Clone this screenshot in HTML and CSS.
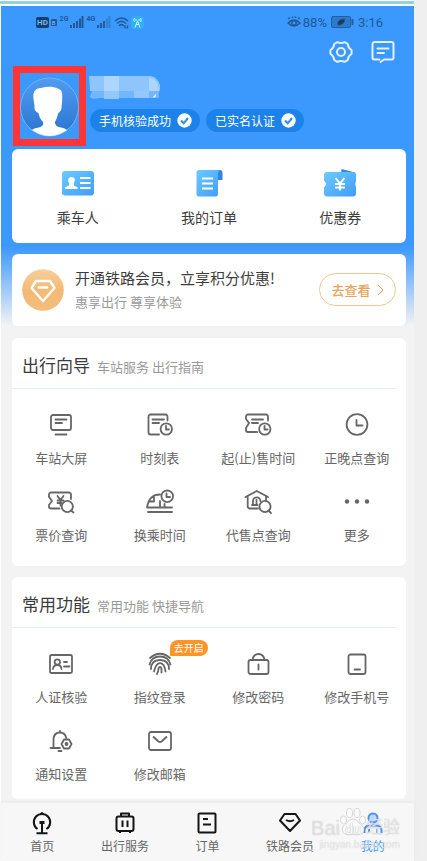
FILE: index.html
```html
<!DOCTYPE html>
<html lang="zh-CN">
<head>
<meta charset="utf-8">
<meta name="viewport" content="width=device-width, initial-scale=1">
<title>我的</title>
<link rel="stylesheet" href="styles.css">
</head>
<body>
<div class="frame">
  <div class="strip"></div>
  <div class="phone">
    <header class="hero">
      <div class="status">
        <div class="status-side">
          <span class="hd">HD</span><span class="sim">B</span>
          <span class="net">2G</span>
          <svg class="bars" width="13" height="12" viewBox="0 0 13 12"><path d="M1 12V9M4 12V7M7 12V5M10 12V2.500M12.500 12V0"/></svg>
          <span class="net">4G</span>
          <svg class="bars" width="13" height="12" viewBox="0 0 13 12"><path d="M1 12V9M4 12V7M7 12V5"/><path class="dim" d="M10 12V2.500M12.500 12V0"/></svg>
          <svg class="wifi" width="15" height="13" viewBox="0 0 15 13"><path d="M1 5Q7.500-1 14 5M3 7.500Q7.500 3 12 7.500M5 9.800Q7.500 7.500 10 9.800"/><path d="M7.500 11.500h.5M11 9.500v3M13.500 9.500v3"/></svg>
          <svg class="hotspot" width="13" height="13" viewBox="0 0 13 13"><rect width="13" height="13" rx="3" fill="#2cb0fa"/><path d="M6.500 5L4 11.500M6.500 5L9 11.500M5 8.500h3M3.500 2Q2 4 3.500 6M9.500 2Q11 4 9.500 6M5 3v2M8 3v2" fill="none" stroke="#dff4ff" stroke-width="1"/></svg>
        </div>
        <div class="status-side">
          <svg class="eye" width="14" height="12" viewBox="0 0 14 12"><path d="M1 7Q7 1 13 7Q7 13 1 7ZM2.500 3L1.500 1.500M5.500 2V.5M8.500 2V.5M11.500 3l1-1.500"/><circle cx="7" cy="7" r="2.200"/></svg>
          <span>88%</span>
          <svg class="battery" width="23" height="12" viewBox="0 0 23 12"><rect x=".5" y=".5" width="19" height="11" rx="1.500" fill="#2f7acb" stroke="#235e9f"/><path d="M7 9C6 5 9 3 14 3C13.500 7 11 9.500 7 9Z" fill="#173a64"/><path d="M21.500 3v6" stroke="#235e9f" stroke-width="2"/></svg>
          <span>3:16</span>
        </div>
      </div>
      <div class="toolbar">
        <button class="icon-button" aria-label="设置"><svg width="24" height="24" viewBox="0 0 24 24"><path d="M8.300 2.200Q12 4 15.700 2.200L18.800 4Q19 7.800 22.600 10.300V13.700Q19 16.200 18.800 20L15.700 21.800Q12 20 8.300 21.800L5.200 20Q5 16.200 1.400 13.700V10.300Q5 7.800 5.200 4Z"/><circle cx="12" cy="12" r="4"/></svg></button>
        <button class="icon-button" aria-label="消息"><svg width="24" height="24" viewBox="0 0 24 24"><path d="M8.500 19.500H3.500a2 2 0 0 1-2-2V4a2 2 0 0 1 2-2h17a2 2 0 0 1 2 2v13.500a2 2 0 0 1-2 2H13L9.500 22M6.500 8.500h11M6.500 13h6.500"/></svg></button>
      </div>
      <section class="profile">
        <div class="avatar">
          <svg width="59" height="66" viewBox="0 0 59 66">
            <defs>
              <linearGradient id="avatarFill" x1="0" y1="0" x2="0" y2="1"><stop offset="0" stop-color="#519cf2"/><stop offset="1" stop-color="#2a73cf"/></linearGradient>
              <clipPath id="avatarClip"><circle cx="29.500" cy="34" r="29"/></clipPath>
            </defs>
            <circle cx="29.500" cy="34" r="29" fill="url(#avatarFill)" stroke="#73b2f8"/>
            <path clip-path="url(#avatarClip)" fill="#fff" d="M14.500 33L13.500 26C12.500 18 16 15 21 15C29 12.500 38 14 41.500 18Q43 22 41.500 34C42 38 39 39 38 41C37 45 36 47 35 49C35 53 38 54 43 55C48 57 50 58 51 66H8C8 58 11 57 16 55C21 54 24 53 23 49C20 46 19 43 18.500 40C16 39 14 37 14.500 33Z"/>
          </svg>
        </div>
        <div class="identity">
          <svg width="72" height="25" viewBox="0 0 72 25" aria-label="姓名已隐藏">
            <path fill="#8fc5fd" d="M0 0H62Q69 2 71 9V15H1Z"/>
            <path fill="#add5fe" d="M15 0H30V15H15ZM60 2Q69 2 70 15H60Z"/>
            <path fill="#72b6fc" d="M3 15H70V22H10Q1 24 1 20Z"/>
            <path fill="#93c7fd" d="M15 15H30V23H15ZM45 15H60V22H45Z"/>
            <path fill="#fff" d="M64 21L67 18V20L65 22Z"/>
          </svg>
          <div class="chips">
            <span class="chip">手机核验成功<svg width="15" height="15" viewBox="0 0 15 15"><circle cx="7.500" cy="7.500" r="7.200" fill="#fff"/><path d="M4 7.500l2.700 2.800L11 5"/></svg></span>
            <span class="chip">已实名认证<svg width="15" height="15" viewBox="0 0 15 15"><circle cx="7.500" cy="7.500" r="7.200" fill="#fff"/><path d="M4 7.500l2.700 2.800L11 5"/></svg></span>
          </div>
        </div>
      </section>

      <nav class="card shortcuts" aria-label="快捷入口">
        <a class="tile shortcut" href="#passengers">
          <svg width="34" height="28" viewBox="0 0 34 28">
            <defs><linearGradient id="blue" x1="0" y1="0" x2="1" y2="1"><stop offset="0" stop-color="#6ccbff"/><stop offset="1" stop-color="#409cfa"/></linearGradient></defs>
            <rect x="1" y="2" width="32" height="24.500" rx="3" fill="url(#blue)"/>
            <path fill="#fff" d="M10.500 8C14 8 14.500 11 13 14C12.500 16.500 13 17 16.500 18V20H4V18C8 17 8.500 16.500 8 14C6.500 11 7 8 10.500 8Z"/>
            <path d="M19 9h10.500M19 14h10.500M19 19h10.500" stroke="#fff" stroke-width="2"/>
          </svg>
          <span>乘车人</span>
        </a>
        <a class="tile shortcut" href="#orders">
          <svg width="34" height="28" viewBox="0 0 34 28">
            <path d="M24 1h4q2.500 0 2.500 3v7H26V4Z" fill="#2d86e4"/>
            <path d="M7 1H28Q26 2 26 5V25q0 2.500-2.500 2.500H7Q4.500 27.500 4.500 25V3.500Q4.500 1 7 1Z" fill="url(#blue)"/>
            <path d="M10 9.500h11M10 14.500h11M10 19.500h11" stroke="#fff" stroke-width="2"/>
          </svg>
          <span>我的订单</span>
        </a>
        <a class="tile shortcut" href="#coupons">
          <svg width="34" height="28" viewBox="0 0 34 28">
            <path d="M18.500 0L32 3.500V6H18Z" fill="#2d86e4"/>
            <path d="M4 3H30Q33 3 33 6V12Q31.500 15 33 18V24.500Q33 27.500 30 27.500H4Q1 27.500 1 24.500V18Q5.500 15 1 12V6Q1 3 4 3Z" fill="url(#blue)"/>
            <path d="M12.500 9l4.500 5.500 4.500-5.500M12 15h10M12 18.500h10M17 14.500v7" stroke="#fff" stroke-width="1.800" fill="none"/>
          </svg>
          <span>优惠券</span>
        </a>
      </nav>

      <section class="card member">
        <svg class="medal" width="42" height="42" viewBox="0 0 42 42">
          <defs><linearGradient id="gold" x1="0" y1="0" x2="0" y2="1"><stop offset="0" stop-color="#f7cf9b"/><stop offset=".5" stop-color="#f3ba75"/><stop offset="1" stop-color="#f3bd7c"/></linearGradient></defs>
          <circle cx="21" cy="21" r="20.800" fill="url(#gold)"/>
          <path d="M14 12H28L32.500 19L21 32L9.500 19Z" fill="none" stroke="#fff" stroke-width="2.400"/>
          <path d="M17 18.500h8" stroke="#fff" stroke-width="2.600" stroke-linecap="round"/>
        </svg>
        <div class="member-text">
          <h2>开通铁路会员，立享积分优惠!</h2>
          <p>惠享出行 尊享体验</p>
        </div>
        <button class="join">去查看<svg width="7" height="12" viewBox="0 0 7 12"><path d="M1 1l5 5-5 5"/></svg></button>
      </section>
    </header>

    <main class="content">
      <section class="card">
        <div class="card-head"><h2>出行向导</h2><p>车站服务 出行指南</p></div>
        <div class="grid">
          <a class="tile" href="#screen"><svg class="line" width="28" height="28" viewBox="0 0 28 28"><rect x="4" y="4" width="20" height="15" rx="2"/><path d="M8.500 8.500h11M8.500 12h6.500M8.500 23.500h11"/></svg><span>车站大屏</span></a>
          <a class="tile" href="#timetable"><svg class="line" width="28" height="28" viewBox="0 0 28 28"><path d="M21.500 9.500v-4a2 2 0 0 0-2-2h-15a2 2 0 0 0-2 2v16a2 2 0 0 0 2 2H13M6.500 8.500H18M6.500 12H13"/><circle cx="20.300" cy="18" r="5.700"/><path d="M20 15v3.500h3"/></svg><span>时刻表</span></a>
          <a class="tile" href="#sale"><svg class="line" width="28" height="28" viewBox="0 0 28 28"><path d="M24 9.500v-4a2 2 0 0 0-2-2H4a2 2 0 0 0-2 2V8l3 4-3 5v2a2 2 0 0 0 2 2h9M8 8.500h11M8 12h6"/><circle cx="20.800" cy="18" r="5.700"/><path d="M20.500 15v3.500h3"/></svg><span>起(止)售时间</span></a>
          <a class="tile" href="#ontime"><svg class="line" width="28" height="28" viewBox="0 0 28 28"><circle cx="14" cy="13.500" r="10.400"/><path d="M13.500 9v5.500h6"/></svg><span>正晚点查询</span></a>
          <a class="tile" href="#price"><svg class="line" width="28" height="28" viewBox="0 0 28 28"><path d="M24 11V6.500a2 2 0 0 0-2-2H4a2 2 0 0 0-2 2V9l3 4-3 4v1.500a2 2 0 0 0 2 2h8.500M10.500 8l3 4 3-4M10.500 12.500h6M10.500 15h4M13.500 12v5.500"/><circle cx="20.300" cy="18.500" r="5.600"/><path d="M24 22.500l2.500 2"/></svg><span>票价查询</span></a>
          <a class="tile" href="#transfer"><svg class="line" width="28" height="28" viewBox="0 0 28 28"><path d="M14 6.500C7 6.500 2.500 10 1 19.500H26M3.500 13.500H8V8M14 13v6.500M18.500 16v3.500M2 24H26"/><circle cx="21.200" cy="8.300" r="5.800"/><path d="M20.500 5.500V9h3.500"/></svg><span>换乘时间</span></a>
          <a class="tile" href="#agency"><svg class="line" width="28" height="28" viewBox="0 0 28 28"><path d="M1.500 9L12.800 3 24 9M3.700 8v10.500a2 2 0 0 0 2 2H14M22 8.500v4M9 17v-4a3.700 3.700 0 0 1 7.400 0M8 17h5.500M12.500 12v5"/><circle cx="21" cy="18.500" r="5.600"/><path d="M24.500 22.500l2.500 2.500"/></svg><span>代售点查询</span></a>
          <a class="tile" href="#more"><svg width="28" height="28" viewBox="0 0 28 28" fill="#666"><circle cx="4" cy="13.500" r="2.200"/><circle cx="14" cy="13.500" r="2.200"/><circle cx="24" cy="13.500" r="2.200"/></svg><span>更多</span></a>
        </div>
      </section>

      <section class="card card-last">
        <div class="card-head"><h2>常用功能</h2><p>常用功能 快捷导航</p></div>
        <div class="grid">
          <a class="tile" href="#verify"><svg class="line" width="28" height="28" viewBox="0 0 28 28"><rect x="3" y="5" width="22" height="18" rx="1.500"/><circle cx="10.300" cy="12" r="2.700"/><path d="M6 19Q6.500 15 10.300 15T14.500 19M17 12h3M17 16.500h5.500"/></svg><span>人证核验</span></a>
          <a class="tile" href="#fingerprint"><svg class="line" width="28" height="28" viewBox="0 0 28 28"><path d="M4 8Q14-.5 24 8M3.500 14.500Q5.500 6.500 14 6.500Q22.500 6.500 24.500 14.500M5 19Q5 10 14 10Q23 10 23 19M8 21.500Q10 13.200 14 13.200Q18.500 13.200 19.500 21.500M11 24Q12.500 21 12.500 18.500Q14 15.500 15.500 18.500V22.500"/></svg><span>指纹登录</span><b class="badge">去开启</b></a>
          <a class="tile" href="#password"><svg class="line" width="28" height="28" viewBox="0 0 28 28"><rect x="4.500" y="10" width="20" height="14" rx="2"/><path d="M8.500 10a6 6 0 0 1 12 0M14.500 14.500v5"/></svg><span>修改密码</span></a>
          <a class="tile" href="#mobile"><svg class="line" width="28" height="28" viewBox="0 0 28 28"><rect x="5.500" y="4.500" width="17" height="19.500" rx="2"/><path d="M11.500 19.500h5.500"/></svg><span>修改手机号</span></a>
          <a class="tile" href="#notice"><svg class="line" width="28" height="28" viewBox="0 0 28 28"><path d="M13 4V5M3.500 21H13M6.500 20.500V12Q7 5.500 13 5.500Q18 5.500 19.300 11M11.500 24h3"/><path d="M17 12.500h5l2.500 4.500-2.500 4.500h-5L14.500 17Z"/><circle cx="19.500" cy="17" r="1"/></svg><span>通知设置</span></a>
          <a class="tile" href="#email"><svg class="line" width="28" height="28" viewBox="0 0 28 28"><rect x="3" y="5" width="22" height="18" rx="2"/><path d="M7.500 10l5 4.500q1.500 1 3 0l5-4.500"/></svg><span>修改邮箱</span></a>
        </div>
      </section>
    </main>

    <nav class="tabs" aria-label="主导航">
      <a class="tab" href="#home"><svg width="24" height="24" viewBox="0 0 24 24"><path d="M7.500 18A8.200 8.200 0 1 1 16.500 18M12 12v9.500M6.500 22.300h11M10.500 3l1.500-1 1.500 1"/><path d="M9.500 11.500h5" stroke-width="3"/></svg><span>首页</span></a>
      <a class="tab" href="#travel"><svg width="24" height="24" viewBox="0 0 24 24"><rect x="3.500" y="5.500" width="17" height="14.500" rx="2"/><path d="M8 5V2.500h8V5M9.500 9.500v6.500M14.500 9.500v6.500M7 20v2M17 20v2"/></svg><span>出行服务</span></a>
      <a class="tab" href="#order"><svg width="24" height="24" viewBox="0 0 24 24"><rect x="3.500" y="2.500" width="17" height="19" rx="1"/><path d="M8 8h5M8 13.500h8"/></svg><span>订单</span></a>
      <a class="tab" href="#member"><svg width="24" height="24" viewBox="0 0 24 24"><path d="M6.500 3H17.500L22 9.500 12 20 2 9.500ZM8 9q4 2.500 8 0"/></svg><span>铁路会员</span></a>
      <a class="tab tab-active" href="#me" aria-current="page"><svg width="24" height="24" viewBox="0 0 24 24"><circle cx="12" cy="7" r="4.500" fill="#bfd8fc"/><path d="M3.500 22V19Q4 14.500 9 14.500H15Q20 14.500 20.500 19V22M8 18v4M16 18v4"/></svg><span>我的</span></a>
    </nav>

    <div class="watermark">
      <div class="wm-brand">
        <span>Bai</span>
        <span class="wm-paw"><svg width="26" height="28" viewBox="0 0 26 28"><ellipse cx="3.500" cy="12" rx="3" ry="4"/><ellipse cx="9.500" cy="5" rx="3" ry="4.500"/><ellipse cx="17" cy="5" rx="3" ry="4.500"/><ellipse cx="22.500" cy="12" rx="3" ry="4"/><path d="M13 11Q17 11 19 15Q25 19 23.500 23Q22 28 13 26.500Q4 28 2.500 23Q1 19 7 15Q9 11 13 11Z"/></svg><i>du</i></span>
        <span class="wm-cn">经验</span>
      </div>
      <div class="wm-url">jingyan.baidu.com</div>
    </div>
  </div>
</div>
</body>
</html>
```
FILE: styles.css
```css
* { box-sizing: border-box; }

body {
  margin: 0;
  background: #efefef;
  color: #3c3c3c;
  font-family: "Noto Sans CJK SC", sans-serif;
  font-size: 13px;
}

h2, p { margin: 0; font-weight: 400; }
a { color: inherit; text-decoration: none; }
svg { display: block; flex: none; overflow: visible; }
button { margin: 0; padding: 0; border: 0; background: none; font: inherit; }

.frame {
  display: flex;
  flex-direction: column;
  min-height: 100vh;
  margin-right: 13px;
  padding-top: 1px;
  background: #fff;
}

.strip { height: 3px; margin-bottom: 2px; background: #94d3dc; }

.phone {
  position: relative;
  display: flex;
  flex: 1;
  flex-direction: column;
  margin-left: 1px;
  background: #f3f3f3;
}

.hero {
  padding: 0 8px 0 11px;
  background: linear-gradient(#3b98fc 0, #3b98fc 240px, #f3f3f3 100%);
}

/* Status bar */
.status {
  display: flex;
  justify-content: space-between;
  height: 32px;
  padding: 0 23px 0 24px;
  color: #205995;
  font: 13px Roboto, sans-serif;
}

.status-side { display: flex; align-items: center; gap: 2px; }
.status-side svg { fill: none; stroke: #205995; }
.hd { padding: 0 1px; border-radius: 2px; background: #173e6b; color: #70b5fb; font-size: 8px; font-weight: 700; line-height: 11px; }
.sim { padding: 0 1px; border-radius: 1px; background: #205995; color: #8fc5fd; font-size: 6px; line-height: 7px; }
.net { align-self: flex-start; margin-left: 1px; padding-top: 8px; font-size: 7px; font-weight: 700; line-height: 10px; }
.status-side .bars { stroke-width: 2; }
.bars .dim { opacity: .4; }
.status-side .wifi { margin-left: 2px; stroke-width: 1.5; }
.status-side .hotspot { stroke: none; }
.status-side .eye { stroke-width: 1.5; }
.battery { margin: 0 2px; }

.toolbar { display: flex; justify-content: flex-end; gap: 18px; height: 28px; padding-right: 11px; }
.icon-button { display: flex; align-items: center; }
.icon-button svg { fill: none; stroke: #e4f1ff; stroke-width: 2; stroke-linejoin: round; stroke-linecap: round; }

/* Profile */
.profile { display: flex; gap: 3px; margin-bottom: 3px; }
.avatar { margin-left: 1px; border: 7px solid #fc3634; }
.identity { display: flex; flex-direction: column; gap: 8px; padding-top: 10px; }
.chips { display: flex; gap: 6px; margin-left: 1px; }
.chip {
  display: flex;
  align-items: center;
  gap: 6px;
  height: 23px;
  padding: 0 8px 0 9px;
  border-radius: 12px;
  background: #1c82ea;
  color: #fff;
  font-size: 12px;
}
.chip path { fill: none; stroke: #2c8cf0; stroke-width: 2; }

/* Cards */
.card { border-radius: 6px; background: #fff; }

.tile {
  position: relative;
  display: flex;
  flex-direction: column;
  align-items: center;
  gap: 9px;
  color: #666;
  line-height: 20px;
  white-space: nowrap;
}

.shortcuts {
  display: grid;
  grid-template-columns: repeat(3, 1fr);
  margin-bottom: 11px;
  padding: 20px 0 15px;
}
.shortcut { color: #3c3c3c; font-size: 14px; line-height: 22px; }

.member { display: flex; align-items: center; gap: 11px; padding: 13px 10px 14px; }
.member-text { flex: 1; white-space: nowrap; }
.member-text h2 { margin-bottom: 3px; font-size: 15px; line-height: 22px; }
.member-text p { color: #999; line-height: 20px; }
.join {
  display: flex;
  align-items: center;
  justify-content: center;
  gap: 6px;
  width: 77px;
  height: 33px;
  border: 1px solid #f0c78f;
  border-radius: 17px;
  color: #e5a55b;
  font-weight: 500;
}
.join path { fill: none; stroke: #e5a55b; }

.content {
  display: flex;
  flex: 1;
  flex-direction: column;
  gap: 11px;
  padding: 12px 8px 4px 11px;
}
.card-last { flex: 1; }

.card-head {
  display: flex;
  align-items: baseline;
  gap: 7px;
  margin-right: 8px;
  padding: 15px 0 11px 10px;
  border-bottom: 1px solid #eaeff1;
}
.card-head h2 { font-size: 17px; line-height: 24px; }
.card-head p { color: #999; line-height: 20px; }

.grid {
  display: grid;
  grid-template-columns: repeat(4, 1fr);
  row-gap: 20px;
  padding: 22px 0 21px;
}
.card-last .grid { padding-bottom: 0; }

.line { fill: none; stroke: #666; stroke-width: 1.8; stroke-linecap: round; stroke-linejoin: round; }

.badge {
  position: absolute;
  top: -10px;
  left: calc(50% + 10px);
  padding: 0 4px;
  border-radius: 8px 8px 8px 1px;
  background: #ff9427;
  color: #fff;
  font-size: 10px;
  font-weight: 400;
  line-height: 16px;
}

/* Bottom tabs */
.tabs {
  display: grid;
  grid-template-columns: repeat(5, 1fr);
  padding: 8px 0 7px;
  background: #f7f7f7;
  box-shadow: 0 -1px 3px #e6e6e6;
}
.tab { display: flex; flex-direction: column; align-items: center; gap: 3px; color: #666; font-size: 12px; line-height: 16px; white-space: nowrap; }
.tab svg { fill: none; stroke: #151515; stroke-width: 2; stroke-linejoin: round; }
.tab-active { color: #3b98fc; }
.tab-active svg { stroke: #4d8ff5; }

/* Translucent mark over the tab bar */
.watermark {
  position: absolute;
  right: 14px;
  bottom: 10px;
  color: #ffffff80;
  font-family: "Liberation Sans", "Noto Sans CJK SC", sans-serif;
  text-shadow: 0 0 1px #bbb;
  pointer-events: none;
}
.wm-brand { display: flex; align-items: flex-end; height: 31px; font-size: 20px; line-height: 22px; }
.wm-paw { position: relative; }
.wm-paw svg { margin-bottom: 3px; fill: #ffffff80; stroke: #d8d8d8; stroke-width: 1; }
.wm-paw i { position: absolute; right: 0; bottom: 2px; left: 0; color: #fff; font-size: 14px; line-height: 16px; text-align: center; font-style: normal; text-shadow: 0 0 1px #888; }
.wm-cn { font-size: 17px; }
.wm-url { color: #ffffff66; font-size: 10px; line-height: 12px; text-align: right; text-shadow: 0 0 1px #ccc; }
```
